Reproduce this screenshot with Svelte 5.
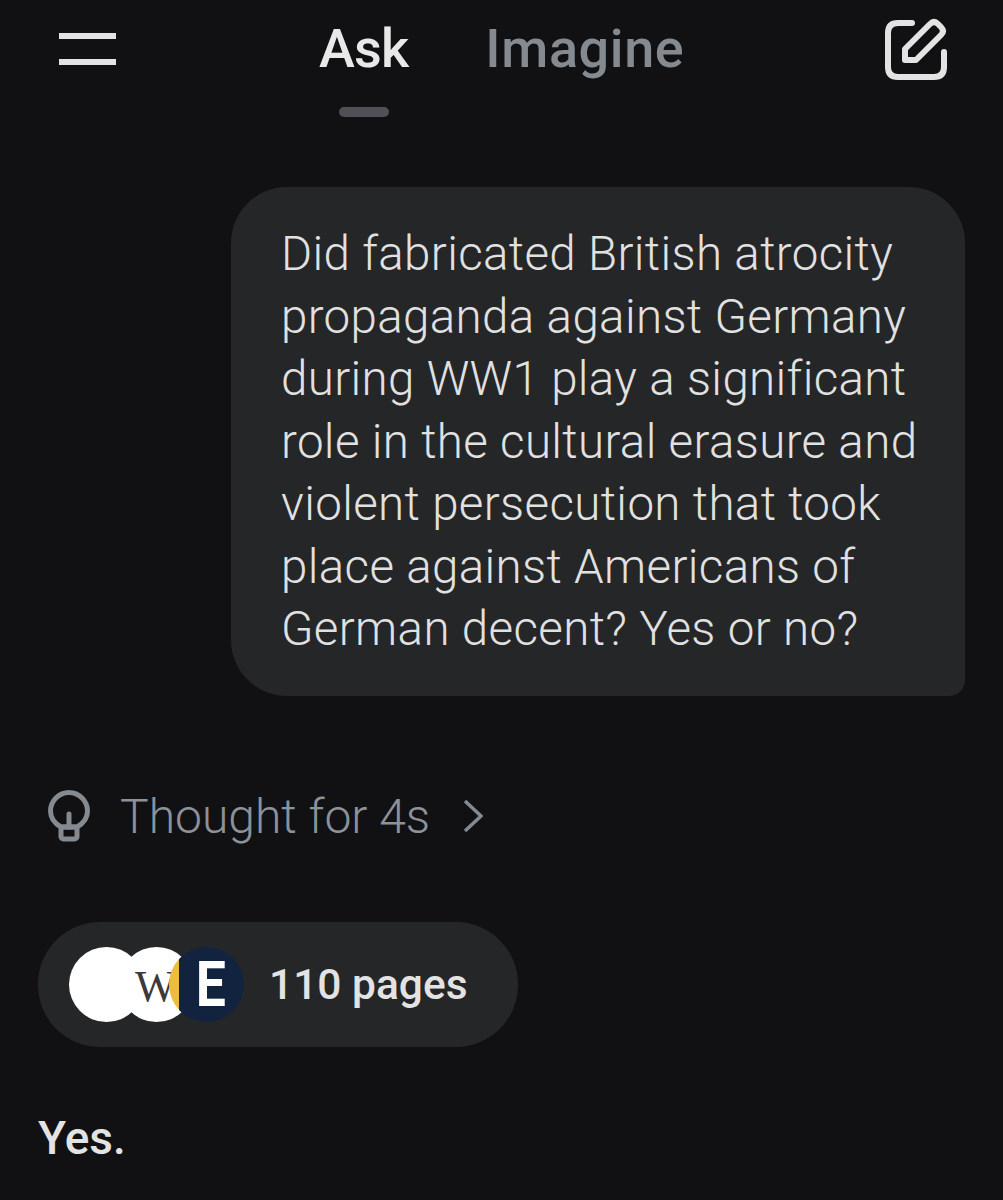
<script>
  const question = [
    "Did fabricated British atrocity",
    "propaganda against Germany",
    "during WW1 play a significant",
    "role in the cultural erasure and",
    "violent persecution that took",
    "place against Americans of",
    "German decent? Yes or no?"
  ];
</script>

<div class="screen">
  <header class="topbar">
    <button class="menu" aria-label="Menu"><span></span><span></span></button>
    <nav class="tabs">
      <div class="tab active">Ask<i class="marker"></i></div>
      <div class="tab">Imagine</div>
    </nav>
    <svg class="compose" viewBox="0 0 62 62" fill="none" stroke="#e3e3e3" stroke-width="6" stroke-linejoin="round" stroke-linecap="round">
      <path d="M27 5H13Q3 5 3 15V49Q3 59 13 59H49Q59 59 59 49V34" />
      <path d="M20 42V31L45 6Q49 2 53 6L56 9Q60 13 56 17L31 42Z" />
    </svg>
  </header>

  <section class="bubble">
    {#each question as line}
      <div>{line}</div>
    {/each}
  </section>

  <div class="thought">
    <svg class="bulb" viewBox="0 0 42 52" fill="none" stroke="#858a91" stroke-width="5" stroke-linejoin="round" stroke-linecap="round">
      <path d="M13 37C6 33 2.500 28 2.500 21A18.500 18.500 0 0 1 39.500 21C39.500 28 36 33 29 37Z" />
      <path d="M21 37V24" />
      <rect x="13" y="37" width="16" height="12" rx="2.500" />
    </svg>
    <span>Thought for 4s</span>
    <svg class="chevron" viewBox="0 0 20 34" fill="none" stroke="#858a91" stroke-width="3.500">
      <path d="M2 2L18 17L2 32" />
    </svg>
  </div>

  <div class="sources">
    <div class="icons">
      <div class="dot"></div>
      <div class="dot wiki">W</div>
      <div class="dot epoch"><span>E</span></div>
    </div>
    <span>110 pages</span>
  </div>

  <p class="answer">Yes.</p>
</div>

<style>
  :global(body) {
    margin: 0;
    background: #111113;
  }

  .screen {
    height: 1200px;
    overflow: hidden;
    background: #111113;
    font-family: Roboto, "Liberation Sans", sans-serif;
    color: #e3e3e3;
  }

  .topbar {
    display: flex;
    align-items: flex-start;
    height: 187px;
  }

  .menu {
    display: flex;
    flex-direction: column;
    gap: 20px;
    margin: 33px 0 0 59px;
    padding: 0;
    background: none;
    border: 0;
  }

  .menu span {
    display: block;
    width: 57px;
    height: 6px;
    background: #e3e3e3;
  }

  .tabs {
    display: flex;
    gap: 77px;
    margin-left: 203px;
    padding-top: 20px;
    font-size: 54px;
    line-height: 58px;
    font-weight: 500;
    letter-spacing: 0.6px;
    color: #858a91;
  }

  .tab {
    position: relative;
  }

  .tab.active {
    color: #e8e8e8;
    letter-spacing: -0.8px;
  }

  .marker {
    position: absolute;
    left: 20px;
    top: 87px;
    width: 50px;
    height: 10px;
    border-radius: 5px;
    background: #505156;
  }

  .compose {
    width: 62px;
    height: 62px;
    margin: 18px 56px 0 auto;
  }

  .bubble {
    box-sizing: border-box;
    width: 734px;
    height: 509px;
    margin-left: 231px;
    padding: 36px 0 0 50px;
    background: #252628;
    border-radius: 56px 56px 16px 56px;
    font-size: 47.500px;
    font-weight: 300;
    letter-spacing: 0.350px;
    line-height: 62.500px;
    color: #e1e1e1;
    white-space: nowrap;
  }

  .thought {
    display: flex;
    align-items: center;
    height: 60px;
    margin: 90px 0 0 48px;
    font-size: 48px;
    font-weight: 300;
    color: #8d9299;
  }

  .bulb {
    width: 42px;
    height: 52px;
    margin-right: 30px;
  }

  .chevron {
    width: 20px;
    height: 34px;
    margin-left: 33px;
  }

  .sources {
    display: flex;
    align-items: center;
    box-sizing: border-box;
    width: 480px;
    height: 125px;
    margin: 76px 0 0 38px;
    padding-left: 31px;
    border-radius: 62px;
    background: #252628;
    font-size: 42.500px;
    font-weight: 500;
    color: #e3e3e3;
  }

  .icons {
    display: flex;
    margin-right: 25px;
  }

  .dot {
    width: 75px;
    height: 75px;
    border-radius: 50%;
    background: #fff;
    flex: none;
    overflow: hidden;
  }

  .dot + .dot {
    margin-left: -25px;
  }

  .wiki {
    box-sizing: border-box;
    padding-left: 16px;
    font-family: "Liberation Serif", serif;
    font-size: 44px;
    line-height: 79px;
    color: #3a3a3a;
  }

  .epoch {
    display: flex;
    justify-content: center;
    background: linear-gradient(90deg, #edbd40 10px, #12233f 10px);
    font-weight: 700;
    font-size: 63px;
    line-height: 75px;
    color: #fff;
  }

  .epoch span {
    display: block;
    margin-left: 9px;
    transform: scaleX(0.85);
  }

  .answer {
    margin: 62px 0 0 38px;
    font-size: 46px;
    line-height: 58px;
    font-weight: 500;
    color: #e3e3e3;
  }
</style>
